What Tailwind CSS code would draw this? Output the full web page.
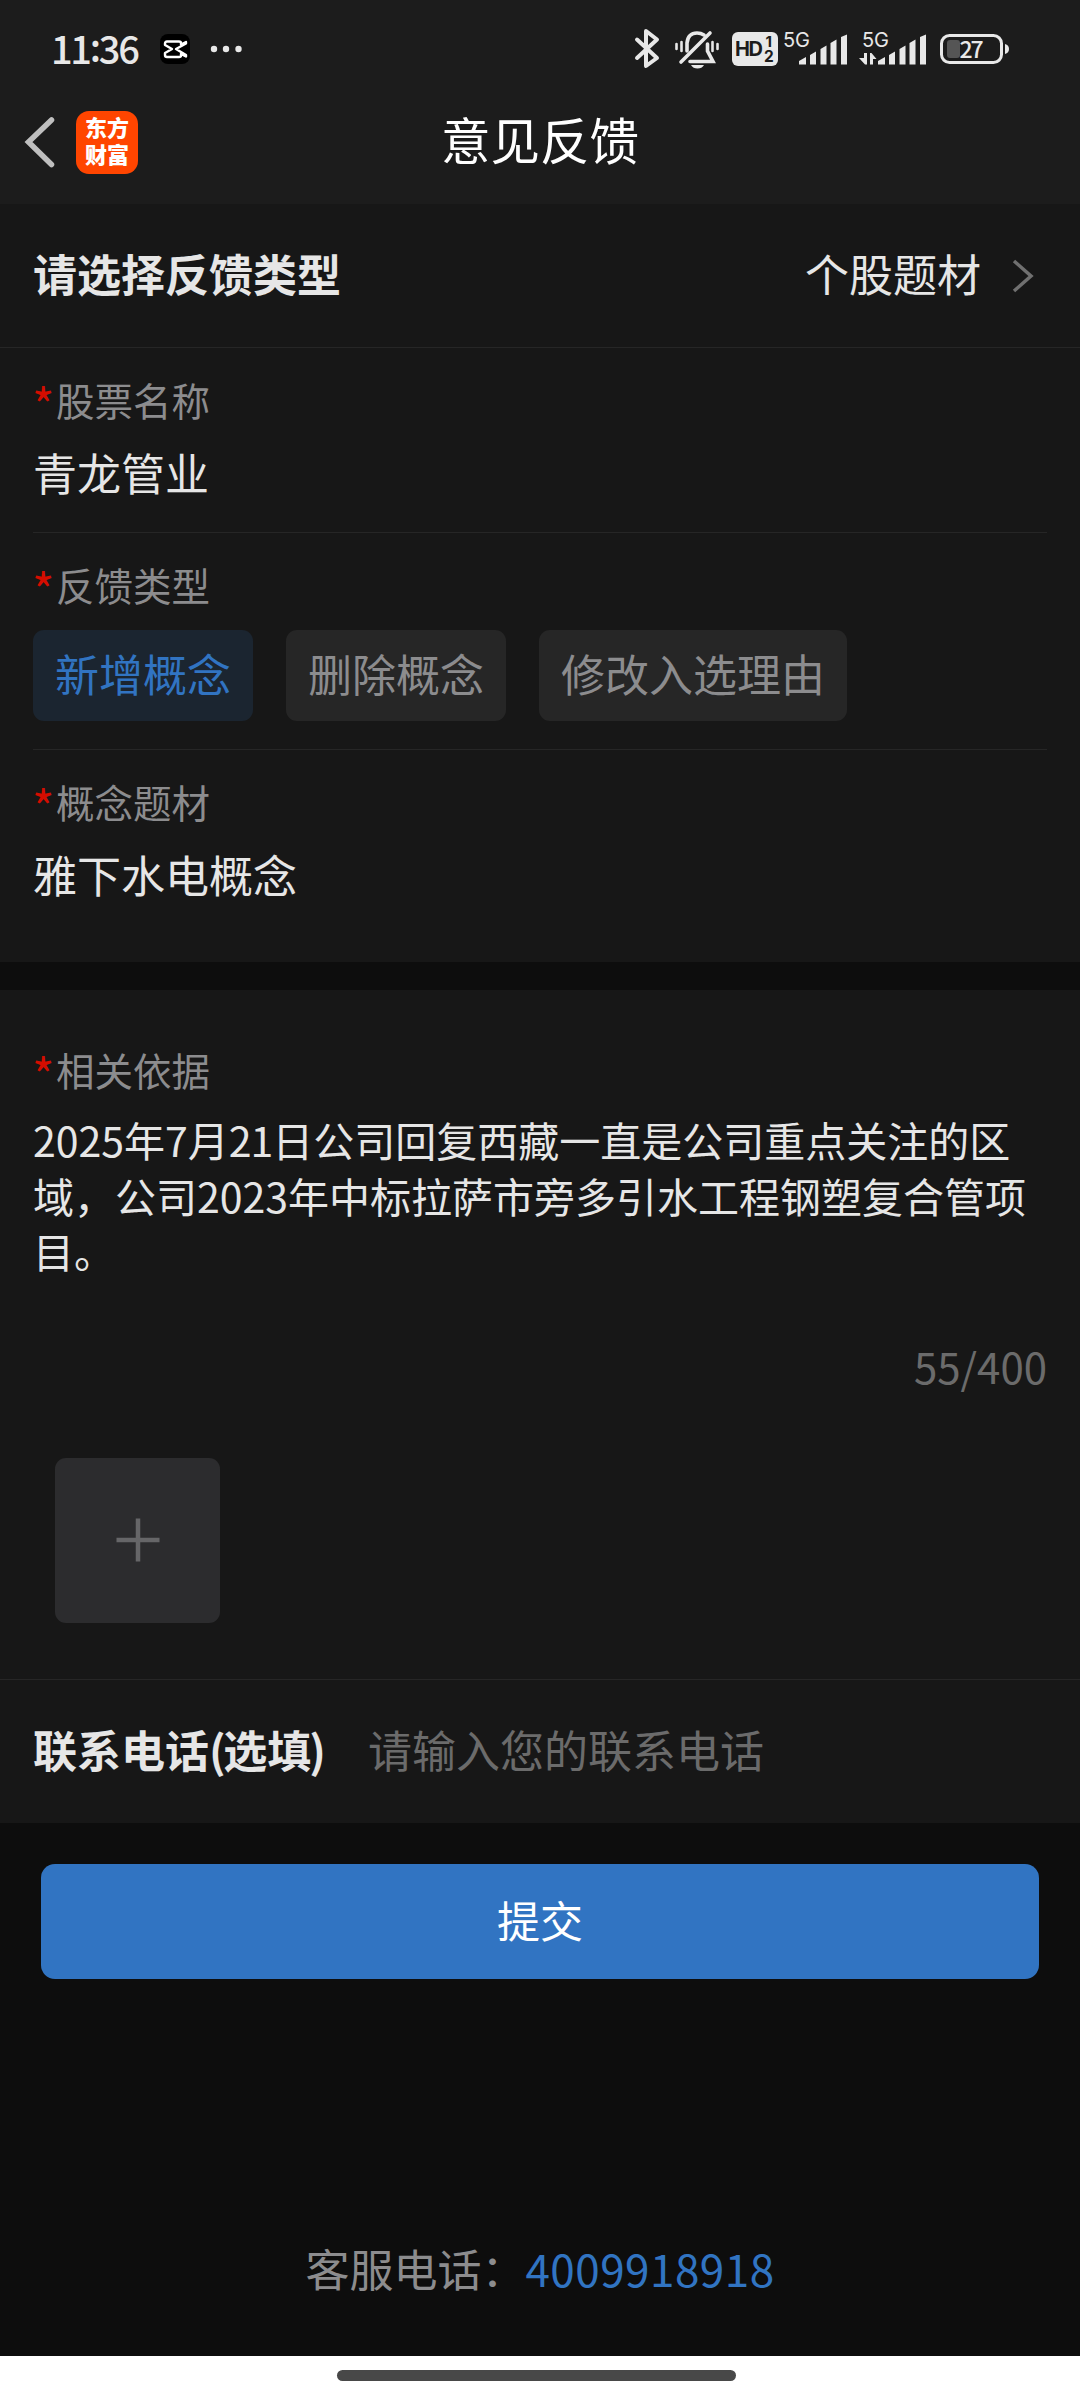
<!DOCTYPE html>
<html lang="zh-CN">
<head>
<meta charset="utf-8">
<title>意见反馈</title>
<script src="https://cdn.jsdelivr.net/npm/@tailwindcss/browser@4"></script>
</head>
<body class="bg-[#0d0d0d]">
<div class="w-[1080px] h-[2400px] flex flex-col overflow-hidden bg-[#0d0d0d] text-[#e6e6e6] text-[44px] leading-[60px] font-['Noto_Sans_CJK_SC',sans-serif]">
  <header class="h-[204px] shrink-0 bg-[#1c1c1c] flex flex-col">
    <div class="h-[98px] flex items-center pl-[51px] pr-[65px] text-[#e8e8e8]">
      <span class="w-[109px] pb-[3px] text-[38px] leading-[40px] font-medium tracking-[-2.300px]">11<span class="relative -top-[2px]">:</span>36</span>
      <svg class="w-[30px] h-[30px]" viewBox="0 0 30 30"><rect width="30" height="30" rx="8" fill="#000"/><path d="M26 9.500V8L21 10.500V9Q21 7.500 19 7.500H7Q5 7.500 5 9.500V11L12 15L5 19V21Q5 23 7 23H19Q21 23 21 21.500V20L26 22.500V21L16 15Z" fill="none" stroke="#fff" stroke-width="2.400" stroke-linejoin="round"/></svg>
      <svg class="w-[32px] h-[8px] ml-[20px]" viewBox="0 0 32 8" fill="#e8e8e8"><circle cx="4" cy="4" r="3.200"/><circle cx="16" cy="4" r="3.200"/><circle cx="28.500" cy="4" r="3.200"/></svg>
      <svg class="ml-auto w-[390px] h-[60px]" viewBox="625 19 390 60" fill="#e8e8e8">
        <path d="M637 39.500L657 58L646 66V31L657 39.500L637 58" fill="none" stroke="#e8e8e8" stroke-width="4" stroke-linejoin="round" stroke-linecap="round"/>
        <g fill="none" stroke="#e8e8e8" stroke-width="3.600" stroke-linecap="round"><path d="M687 51V43Q688 33 697 33Q701 33 704 35"/><path d="M707.500 44V51L713 61.500H690"/><path d="M710 33L681 62"/><path d="M676.500 44V49M681.500 42V51M712.500 42V51M717.500 44V49" stroke-width="2.600"/></g>
        <path d="M691 65H704Q702 68.500 697.500 68.500T691 65Z"/>
        <rect x="732" y="32" width="46" height="34" rx="6"/>
        <g fill="#1c1c1c" class="font-['Inter',sans-serif] font-bold"><text x="735" y="56" font-size="20" textLength="28">HD</text><text x="765.500" y="47" font-size="15">1</text><text x="764" y="61.500" font-size="15.500">2</text></g>
        <g class="font-['Inter',sans-serif]" font-size="20"><text x="783" y="47" textLength="27">5G</text><text x="862" y="47" textLength="27">5G</text></g>
        <g id="bars"><path d="M799 64.500V61L806 57V64.500ZM810 64.500V55L816 51.500V64.500ZM820.500 64.500V49L826.500 45.500V64.500ZM830.500 64.500V43L836.500 39.500V64.500ZM841 64.500V37L847 34.500V64.500Z"/></g>
        <use href="#bars" x="79"/>
        <path d="M864 53H867V64.500H865L859 58H864ZM870 64.500V53H871.500L876.500 59H873V64.500Z"/>
        <rect x="941.500" y="35.500" width="60" height="27" rx="8" fill="none" stroke="#e8e8e8" stroke-width="3"/>
        <rect x="947" y="40" width="13" height="18" rx="3" fill="#555"/>
        <path d="M1005 44Q1009 45 1009 49T1005 54Z"/>
        <text x="959.500" y="57.500" font-size="23" textLength="24" class="font-['Noto_Sans_CJK_SC',sans-serif] font-medium">27</text>
      </svg>
    </div>
    <div class="h-[88px] grid grid-cols-[1fr_auto_1fr] items-center">
      <div class="flex items-center pl-[24px]">
        <svg class="w-[32px] h-[52px]" viewBox="0 0 32 52"><path d="M27.500 4L4.500 26L27.500 48.500" fill="none" stroke="#bfbfbf" stroke-width="5.500" stroke-linecap="round"/></svg>
        <div class="ml-[20px] w-[62px] h-[63px] pb-[5px] rounded-[13px] bg-[#ff4500] text-white text-[22px] leading-[27px] font-black flex flex-col items-center justify-center"><span>东方</span><span>财富</span></div>
      </div>
      <h1 class="text-[49.500px] text-white pb-[6px]">意见反馈</h1>
    </div>
  </header>

  <main>
    <section class="h-[758px] bg-[#171717]">
      <div class="h-[144px] border-b border-[#262626] px-[33px] flex items-center">
        <span class="font-bold pb-[5px]">请选择反馈类型</span>
        <span class="ml-auto pb-[5px]">个股题材</span>
        <svg class="w-[24px] h-[36px] ml-[30px] mr-[12px]" viewBox="0 0 24 36"><path d="M3 3L20 18L3 33" fill="none" stroke="#707070" stroke-width="3.500"/></svg>
      </div>
      <div class="mx-[33px] h-[185px] border-b border-[#262626] pt-[27px]">
        <div class="text-[38.500px] leading-[48px] text-[#8c8c8e] flex"><span class="w-[23px] pt-[4px] -ml-[1px] mr-[1px] h-[48px] text-[48px] text-[#d40d00]">*</span>股票名称</div>
        <div class="mt-[19px]">青龙管业</div>
      </div>
      <div class="mx-[33px] h-[217px] border-b border-[#262626] pt-[27px]">
        <div class="text-[38.500px] leading-[48px] text-[#8c8c8e] flex"><span class="w-[23px] pt-[4px] -ml-[1px] mr-[1px] h-[48px] text-[48px] text-[#d40d00]">*</span>反馈类型</div>
        <div class="mt-[22px] flex gap-[33px] text-[#8c8c8e]">
          <span class="h-[91px] w-[220px] pb-[5px] rounded-[11px] bg-[#1b2530] text-[#3174c2] flex items-center justify-center">新增概念</span>
          <span class="h-[91px] w-[220px] pb-[5px] rounded-[11px] bg-[#262626] flex items-center justify-center">删除概念</span>
          <span class="h-[91px] w-[308px] pb-[5px] rounded-[11px] bg-[#262626] flex items-center justify-center">修改入选理由</span>
        </div>
      </div>
      <div class="mx-[33px] pt-[27px]">
        <div class="text-[38.500px] leading-[48px] text-[#8c8c8e] flex"><span class="w-[23px] pt-[4px] -ml-[1px] mr-[1px] h-[48px] text-[48px] text-[#d40d00]">*</span>概念题材</div>
        <div class="mt-[19px]">雅下水电概念</div>
      </div>
    </section>

    <section class="mt-[28px] h-[833px] bg-[#171717] flex flex-col">
      <div class="h-[690px] border-b border-[#262626] px-[33px] pt-[55px]">
        <div class="text-[38.500px] leading-[48px] text-[#8c8c8e] flex"><span class="w-[23px] pt-[4px] -ml-[1px] mr-[1px] h-[48px] text-[48px] text-[#d40d00]">*</span>相关依据</div>
        <p class="mt-[19px] text-[41px] leading-[55.500px] whitespace-nowrap">2025年7月<span class="tracking-[-1px]">21</span>日公司回复西藏一直是公司重点关注的区<br>域，公司2023年中标拉萨市旁多引水工程钢塑复合管项<br>目。</p>
        <div class="mt-[57px] text-[42px] text-right text-[#6b6b6b]">55/400</div>
        <div class="mt-[62px] ml-[22px] w-[165px] h-[165px] rounded-[11px] bg-[#2c2c2e] flex items-center justify-center">
          <svg class="w-[44px] h-[44px]" viewBox="0 0 44 44"><path d="M22 0.500V43.500M0.500 22H43.500" stroke="#666668" stroke-width="4.500"/></svg>
        </div>
      </div>
      <div class="h-[143px] px-[33px] pb-[5px] flex items-center">
        <span class="font-bold w-[335px]">联系电话<span class="tracking-[-2.500px]">(</span>选填<span class="-ml-[2px]">)</span></span>
        <span class="text-[#6b6b6b]">请输入您的联系电话</span>
      </div>
    </section>

    <button class="block mt-[41px] mx-[41px] w-[998px] h-[115px] pb-[5px] rounded-[14px] bg-[#3174c2] text-white text-[43px]">提交</button>
  </main>

  <footer class="mt-auto">
    <div class="text-center text-[#8c8c8e] pb-[58px]">客服电话：<span class="text-[#3174c2] tracking-[0.500px]">4009918918</span></div>
    <div class="h-[44px] bg-white flex pt-[14px] pl-[337px]"><div class="w-[399px] h-[11px] rounded-full bg-[#484848]"></div></div>
  </footer>
</div>
</body>
</html>
